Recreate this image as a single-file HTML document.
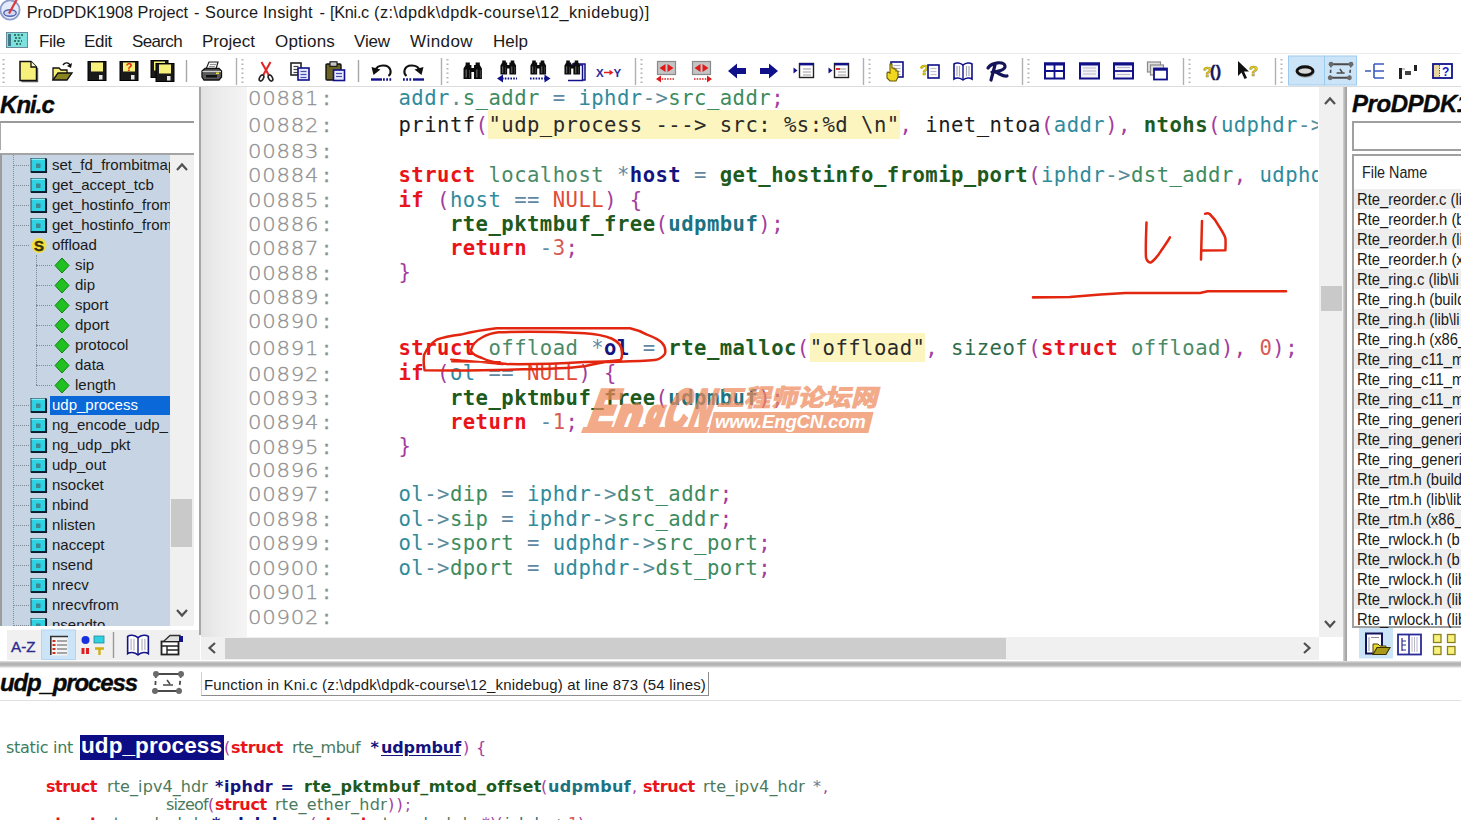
<!DOCTYPE html><html lang="en"><head><meta charset="utf-8"><title>ProDPDK1908 Project - Source Insight</title><style>
html,body{margin:0;padding:0;background:#fff;}
body{width:1461px;height:820px;overflow:hidden;position:relative;font-family:"Liberation Sans",sans-serif;}
.r,.t,.a{position:absolute;}
.t{white-space:pre;line-height:1;}
.sans{font-family:"Liberation Sans",sans-serif;}
.mono{font-family:"Liberation Mono",monospace;}
.dmono{font-family:"DejaVu Sans Mono","Liberation Mono",monospace;}
.dsans{font-family:"DejaVu Sans","Liberation Sans",sans-serif;}
svg{position:absolute;overflow:visible;}
.code{position:absolute;left:398.5px;white-space:pre;line-height:1;font-family:"DejaVu Sans Mono","Liberation Mono",monospace;font-size:20.6px;letter-spacing:0.45px;color:#222;}
.code b{font-weight:bold;}
.v{color:#2f8b9c}.k{color:#e8141a;font-weight:bold}.p{color:#a23c9e}.o{color:#5f88a2}.f{color:#1d5a1d;font-weight:bold}
.d{color:#14147e;font-weight:bold}.ty{color:#4a8a66}.n{color:#d65a55}.nu{color:#e24b36}.pa{color:#1b7282;font-weight:bold}
.s{background:#fdf5c0;color:#2a2a2a;padding:2.6px 0 1.6px}.m{color:#3d8b5e}.ar{color:#5b8c9c}.sz{color:#2e6b4a}.id{color:#1c1c1c}
.ln{position:absolute;left:248.3px;white-space:pre;line-height:1;font-family:"DejaVu Sans","Liberation Sans",sans-serif;font-weight:200;font-size:18.8px;letter-spacing:0.68px;color:#909090;-webkit-text-stroke:0.3px #909090;transform:scaleX(1.13);transform-origin:0 0;}.ln i{font-style:normal;font-weight:400;display:inline-block;width:12.64px;text-align:center;letter-spacing:0}
.tree{position:absolute;white-space:pre;line-height:1;font-size:15px;color:#1a1a1a;letter-spacing:0}
.fl{position:absolute;white-space:pre;line-height:1;font-size:16px;color:#1a1a1a;left:1357px;transform:scaleX(0.923);transform-origin:0 0}
</style></head><body>
<svg style="left:0px;top:0px" width="22" height="24" viewBox="0 0 22 24" ><circle cx="10" cy="10" r="9.6" fill="#e4ebfa" stroke="#8c9ccc" stroke-width="1.8"/><ellipse cx="10" cy="13" rx="6.2" ry="3.2" fill="#d0daf4" stroke="#5464b0" stroke-width="1.4"/><path d="M9 13.5 L17 -1" stroke="#dc3a3a" stroke-width="2.2" fill="none"/></svg>
<div class="t sans" style="left:26.7px;top:4.2px;font-size:16.3px;color:#1a1a1a;letter-spacing:-0.035px;">ProDPDK1908 Project</div>
<div class="t sans" style="left:194.0px;top:4.2px;font-size:16.3px;color:#1a1a1a;">-</div>
<div class="t sans" style="left:205.0px;top:4.2px;font-size:16.3px;color:#1a1a1a;letter-spacing:0.271px;">Source Insight</div>
<div class="t sans" style="left:319.5px;top:4.2px;font-size:16.3px;color:#1a1a1a;">-</div>
<div class="t sans" style="left:330.0px;top:4.2px;font-size:16.3px;color:#1a1a1a;letter-spacing:-0.294px;">[Kni.c</div>
<div class="t sans" style="left:374.0px;top:4.2px;font-size:16.3px;color:#1a1a1a;letter-spacing:0.469px;">(z:\dpdk\dpdk-course\12_knidebug)]</div>
<svg style="left:6px;top:32px" width="22" height="16" viewBox="0 0 22 16" ><rect x="0.5" y="0.5" width="21" height="15" fill="#7fe0e0" stroke="#6a8a9a"/><rect x="2" y="2" width="3" height="12" fill="#3a7a8a"/><path d="M8 3h9M9 6h7M8 9h8M10 12h5" stroke="#1a5a3a" stroke-width="1.6" stroke-dasharray="2 1.5"/></svg>
<div class="t sans" style="left:39.0px;top:32.6px;font-size:17px;color:#1a1a1a;letter-spacing:-0.348px;">File</div>
<div class="t sans" style="left:84.0px;top:32.6px;font-size:17px;color:#1a1a1a;letter-spacing:-0.323px;">Edit</div>
<div class="t sans" style="left:132.0px;top:32.6px;font-size:17px;color:#1a1a1a;letter-spacing:-0.644px;">Search</div>
<div class="t sans" style="left:202.0px;top:32.6px;font-size:17px;color:#1a1a1a;letter-spacing:0.013px;">Project</div>
<div class="t sans" style="left:275.0px;top:32.6px;font-size:17px;color:#1a1a1a;letter-spacing:0.202px;">Options</div>
<div class="t sans" style="left:354.0px;top:32.6px;font-size:17px;color:#1a1a1a;letter-spacing:-0.135px;">View</div>
<div class="t sans" style="left:410.0px;top:32.6px;font-size:17px;color:#1a1a1a;letter-spacing:0.423px;">Window</div>
<div class="t sans" style="left:493.0px;top:32.6px;font-size:17px;color:#1a1a1a;letter-spacing:0.009px;">Help</div>
<div class="r" style="left:0px;top:53px;width:1461px;height:1px;background:#ececec;"></div>
<div class="r" style="left:0px;top:86px;width:1461px;height:1px;background:#dcdcdc;"></div>
<svg style="left:0;top:0" width="1461" height="90" viewBox="0 0 1461 90"><rect x="1288.5" y="56" width="36" height="29" fill="#cce4f7" stroke="#9ccbf0" stroke-width="1"/><rect x="1324.5" y="56" width="32" height="29" fill="#cce4f7" stroke="#9ccbf0" stroke-width="1"/><path d="M186.5 60V82" stroke="#a6a6a6" stroke-width="1.4"/><path d="M358.5 60V82" stroke="#a6a6a6" stroke-width="1.4"/><path d="M236.5 58V85" stroke="#b0b0b0" stroke-width="1.4"/><path d="M441.5 58V85" stroke="#b0b0b0" stroke-width="1.4"/><path d="M635.5 58V85" stroke="#b0b0b0" stroke-width="1.4"/><path d="M863.5 58V85" stroke="#b0b0b0" stroke-width="1.4"/><path d="M1022.5 58V85" stroke="#b0b0b0" stroke-width="1.4"/><path d="M1183.5 58V85" stroke="#b0b0b0" stroke-width="1.4"/><path d="M1275.5 58V85" stroke="#b0b0b0" stroke-width="1.4"/><path d="M3.5 59V85" stroke="#b4b4b4" stroke-width="2" stroke-dasharray="1.5 3"/><path d="M242.5 59V85" stroke="#b4b4b4" stroke-width="2" stroke-dasharray="1.5 3"/><path d="M447.5 59V85" stroke="#b4b4b4" stroke-width="2" stroke-dasharray="1.5 3"/><path d="M641.5 59V85" stroke="#b4b4b4" stroke-width="2" stroke-dasharray="1.5 3"/><path d="M869.5 59V85" stroke="#b4b4b4" stroke-width="2" stroke-dasharray="1.5 3"/><path d="M1028.5 59V85" stroke="#b4b4b4" stroke-width="2" stroke-dasharray="1.5 3"/><path d="M1189.5 59V85" stroke="#b4b4b4" stroke-width="2" stroke-dasharray="1.5 3"/><path d="M1281.5 59V85" stroke="#b4b4b4" stroke-width="2" stroke-dasharray="1.5 3"/><g transform="translate(18,61)"><path d="M2 0.5 H13 L18.5 6 V19.5 H2 Z" fill="#f7f07a" stroke="#111" stroke-width="1.5"/><path d="M13 0.5 V6 H18.5" fill="#fffbd0" stroke="#111" stroke-width="1.3"/><path d="M19.6 7V20.6H3.5" stroke="#555" stroke-width="1.2" fill="none"/></g><g transform="translate(52,61)"><path d="M1 19 V7 H7 L9 9 H15 V12" fill="#f7f07a" stroke="#111" stroke-width="1.3"/><path d="M1 19 L6 12 H20 L15 19 Z" fill="#8a8420" stroke="#111" stroke-width="1.3"/><path d="M11 4 C13 1 17 1 18.5 5" fill="none" stroke="#111" stroke-width="1.4"/><path d="M20 2 L19 7 L15 5 Z" fill="#111"/></g><g transform="translate(87,61)"><g transform="translate(0,0)"><rect x="1" y="0.5" width="18" height="19" fill="#1a1a1a" stroke="#000" stroke-width="1"/><rect x="4" y="1.5" width="12" height="9" fill="#f7f07a"/><rect x="12" y="14" width="3.5" height="4.5" fill="#e8e8e8"/></g></g><g transform="translate(119,61)"><g transform="translate(0,0)"><rect x="1" y="0.5" width="18" height="19" fill="#1a1a1a" stroke="#000" stroke-width="1"/><rect x="4" y="1.5" width="12" height="9" fill="#f7f07a"/><rect x="12" y="14" width="3.5" height="4.5" fill="#e8e8e8"/><text x="10.0" y="10" font-family="Liberation Sans,sans-serif" font-weight="bold" font-size="11" text-anchor="middle" fill="#e02010">?</text></g></g><g transform="translate(153,61)"><g transform="translate(-3,-1)"><rect x="1" y="0.5" width="17" height="17" fill="#1a1a1a" stroke="#000" stroke-width="1"/><rect x="4" y="1.5" width="11" height="9" fill="#f7f07a"/><rect x="11" y="12" width="3.5" height="4.5" fill="#e8e8e8"/></g><g transform="translate(2,2)"><rect x="1" y="0.5" width="18" height="18" fill="#1a1a1a" stroke="#000" stroke-width="1"/><rect x="4" y="1.5" width="12" height="9" fill="#f7f07a"/><rect x="12" y="13" width="3.5" height="4.5" fill="#e8e8e8"/></g></g><g transform="translate(201,61)"><path d="M5 8 L8 1 H17 L15 8 Z" fill="#f4f4f4" stroke="#222" stroke-width="1.2"/><path d="M9 3.5h6M8 5.5h6" stroke="#888" stroke-width="0.9"/><path d="M1 10 L4 7.5 H18 L20.5 10 V16 L18 19 H3 L1 16 Z" fill="#5a5a5a" stroke="#111" stroke-width="1.3"/><path d="M1.5 10.5 H20" stroke="#d0d0d0" stroke-width="1.2"/><rect x="5" y="14" width="11" height="2.5" fill="#111"/><rect x="15" y="11.5" width="3" height="1.6" fill="#e8e040"/></g><g transform="translate(256,61)"><path d="M5.500 1 L13 14.500 M14.500 1 L7 14.500" stroke="#e02828" stroke-width="2.1" fill="none"/><ellipse cx="5.5" cy="17" rx="1.9" ry="3.300" transform="rotate(28 5.500 17)" fill="none" stroke="#222" stroke-width="1.6"/><ellipse cx="14.500" cy="17" rx="1.9" ry="3.300" transform="rotate(-28 14.500 17)" fill="none" stroke="#222" stroke-width="1.6"/></g><g transform="translate(290,61)"><rect x="1" y="2" width="10" height="12" fill="#fff" stroke="#222" stroke-width="1.6"/><path d="M3.5 5.5H8.5" stroke="#444" stroke-width="1.2"/><path d="M3.5 8.5H8.5" stroke="#444" stroke-width="1.2"/><path d="M3.5 11.5H8.5" stroke="#444" stroke-width="1.2"/><rect x="8" y="7" width="11" height="12" fill="#e8ecff" stroke="#10108a" stroke-width="1.6"/><path d="M10.5 10.5H16.5" stroke="#4a4ab0" stroke-width="1.2"/><path d="M10.5 13.5H16.5" stroke="#4a4ab0" stroke-width="1.2"/><path d="M10.5 16.5H16.5" stroke="#4a4ab0" stroke-width="1.2"/></g><g transform="translate(325,61)"><rect x="1" y="3" width="15" height="16" rx="1" fill="#6a6420" stroke="#111" stroke-width="1.4"/><rect x="5" y="0.8" width="7" height="4.5" fill="#c8c8c8" stroke="#111" stroke-width="1.1"/><rect x="8.5" y="9" width="11" height="10.5" fill="#e8ecff" stroke="#10108a" stroke-width="1.6"/><path d="M11.0 12.5H17.0" stroke="#4a4ab0" stroke-width="1.2"/><path d="M11.0 15.5H17.0" stroke="#4a4ab0" stroke-width="1.2"/></g><g transform="translate(371,61)"><path d="M4.500 9.500 C6 3 18 2.500 19.500 9.500 C20 12 19 14 17.500 15" fill="none" stroke="#111" stroke-width="2.1"/><path d="M0.500 6 L9.500 8.500 L2.500 14 Z" fill="#111"/><path d="M0 18.5H11" stroke="#10108a" stroke-width="2.4"/><path d="M12 18.5H21" stroke="#10108a" stroke-width="2.4" stroke-dasharray="1.8 1.4"/></g><g transform="translate(404,61)"><path d="M15.500 9.500 C14 3 2 2.500 0.500 9.500 C0 12 1 14 2.500 15" fill="none" stroke="#111" stroke-width="2.1"/><path d="M19.500 6 L10.500 8.500 L17.500 14 Z" fill="#111"/><path d="M9 18.5H20" stroke="#10108a" stroke-width="2.4"/><path d="M-1 18.5H8" stroke="#10108a" stroke-width="2.4" stroke-dasharray="1.8 1.4"/></g><g transform="translate(462,61)"><g transform="translate(1,1) scale(1.05,1)"><path d="M2.500 0.500h4v2.500h1.500v3h2.500v-3h1.500v-2.500h4v2.500l2 3.500v10.500h-7.500v-7h-2.500v7h-7.500v-10.500l2-3.500z" fill="#0c0c0c"/><path d="M3 7.500V15.500M13.200 7.500V15.500" stroke="#9a9a9a" stroke-width="1" opacity="0.8"/><path d="M6.300 8V16M16.500 8V16" stroke="#555" stroke-width="0.9" opacity="0.8"/></g></g><g transform="translate(497,61)"><g transform="translate(3,-1) scale(0.8925,0.85)"><path d="M2.500 0.500h4v2.500h1.500v3h2.500v-3h1.500v-2.500h4v2.500l2 3.500v10.500h-7.500v-7h-2.500v7h-7.500v-10.500l2-3.500z" fill="#0c0c0c"/><path d="M3 7.500V15.500M13.200 7.500V15.500" stroke="#9a9a9a" stroke-width="1" opacity="0.8"/><path d="M6.300 8V16M16.500 8V16" stroke="#555" stroke-width="0.9" opacity="0.8"/></g><path d="M5 17.5H20" stroke="#10108a" stroke-width="1.8" stroke-dasharray="1.6 1.2"/><path d="M0 17.5 L6 13.5 V21.5 Z" fill="#10108a"/></g><g transform="translate(530,61)"><g transform="translate(0,-1) scale(0.8925,0.85)"><path d="M2.500 0.500h4v2.500h1.500v3h2.500v-3h1.500v-2.500h4v2.500l2 3.500v10.500h-7.500v-7h-2.500v7h-7.500v-10.500l2-3.500z" fill="#0c0c0c"/><path d="M3 7.500V15.500M13.200 7.500V15.500" stroke="#9a9a9a" stroke-width="1" opacity="0.8"/><path d="M6.300 8V16M16.500 8V16" stroke="#555" stroke-width="0.9" opacity="0.8"/></g><path d="M0 17.5H15" stroke="#10108a" stroke-width="1.8" stroke-dasharray="1.6 1.2"/><path d="M20.5 17.5 L14.5 13.5 V21.5 Z" fill="#10108a"/></g><g transform="translate(565,61)"><path d="M7 3H20V19H5" fill="#fff" stroke="#10108a" stroke-width="1.5"/><path d="M5 5.5H17.5V21H3" fill="#fff" stroke="#10108a" stroke-width="1.5" transform="translate(0,-1.5)"/><g transform="translate(-1,-1) scale(0.8925,0.85)"><path d="M2.500 0.500h4v2.500h1.500v3h2.500v-3h1.500v-2.500h4v2.500l2 3.500v10.500h-7.500v-7h-2.500v7h-7.500v-10.500l2-3.500z" fill="#0c0c0c"/><path d="M3 7.500V15.500M13.200 7.500V15.500" stroke="#9a9a9a" stroke-width="1" opacity="0.8"/><path d="M6.300 8V16M16.500 8V16" stroke="#555" stroke-width="0.9" opacity="0.8"/></g></g><text x="596" y="76.500" font-family="Liberation Sans,sans-serif" font-weight="bold" font-size="11.500" fill="#2828a0">X</text><text x="613.500" y="76.500" font-family="Liberation Sans,sans-serif" font-weight="bold" font-size="11.500" fill="#2828a0">Y</text><path d="M604 72.500H611" stroke="#e02020" stroke-width="1.5"/><path d="M613.500 72.500 L609.500 69.800 V75.200 Z" fill="#e02020"/><g transform="translate(656,61)"><rect x="1.5" y="0.5" width="18" height="13" fill="#c4c4c4" stroke="#8a8a8a" stroke-width="1.2"/><path d="M3.500 7 L9.500 3 V11 Z M17.500 7 L11.500 3 V11 Z" fill="#e01818"/><path d="M3 18H18" stroke="#e01818" stroke-width="1.6" stroke-dasharray="1.5 1.2"/><path d="M0 18 L5 14.5 V21.5 Z" fill="#e01818"/></g><g transform="translate(691,61)"><rect x="1.5" y="0.5" width="18" height="13" fill="#c4c4c4" stroke="#8a8a8a" stroke-width="1.2"/><path d="M3.500 7 L9.500 3 V11 Z M17.500 7 L11.500 3 V11 Z" fill="#e01818"/><path d="M3 18H18" stroke="#e01818" stroke-width="1.6" stroke-dasharray="1.5 1.2"/><path d="M21 18 L16 14.5 V21.5 Z" fill="#e01818"/></g><g transform="translate(727,61)"><path d="M1 10 L10 2.5 V7 H19 V13 H10 V17.5 Z" fill="#10108a"/></g><g transform="translate(759,61)"><path d="M19 10 L10 2.5 V7 H1 V13 H10 V17.5 Z" fill="#10108a"/></g><g transform="translate(793,61)"><rect x="6.5" y="2.5" width="14" height="14" fill="#fff" stroke="#222" stroke-width="1.4"/><path d="M6.5 3.2H20.5" stroke="#10108a" stroke-width="2.4"/><path d="M10 8H18M10 11H18M10 14H18" stroke="#9a9a9a" stroke-width="1.2"/><path d="M0.5 6.5 L4.5 9.5 L0.5 12.5 Z" fill="#10108a"/></g><g transform="translate(828,61)"><rect x="6.5" y="2.5" width="14" height="14" fill="#fff" stroke="#222" stroke-width="1.4"/><path d="M6.5 3.2H20.5" stroke="#10108a" stroke-width="2.4"/><path d="M10 8H18M10 11H18M10 14H18" stroke="#9a9a9a" stroke-width="1.2"/><path d="M0.5 6.5 L4.5 9.5 L0.5 12.5 Z" fill="#10108a"/><path d="M8 8H12" stroke="#e01818" stroke-width="1.8"/></g><g transform="translate(885,61)"><rect x="6" y="1" width="12" height="15" fill="#fff" stroke="#10108a" stroke-width="1.6"/><path d="M8.5 4.5H15.5" stroke="#b0b0c8" stroke-width="1.2"/><path d="M8.5 7.5H15.5" stroke="#b0b0c8" stroke-width="1.2"/><path d="M8.5 10.5H15.5" stroke="#b0b0c8" stroke-width="1.2"/><path d="M8.5 13.5H15.5" stroke="#b0b0c8" stroke-width="1.2"/><path d="M2 12 V17 L5 20 H11 L13 16 V10 H11 V8 H9 V7 H7 V3 H5 V12 L3 11 Z" fill="#f0d820" stroke="#6a5a00" stroke-width="1.1"/></g><g transform="translate(920,61)"><text x="0" y="14" font-family="Liberation Sans,sans-serif" font-weight="bold" font-size="15" fill="#efe022" stroke="#9a8c10" stroke-width="0.6">?</text><rect x="8" y="4" width="11" height="13" fill="#fff" stroke="#10108a" stroke-width="1.6"/><path d="M10.5 7.5H16.5" stroke="#c0c0d0" stroke-width="1.2"/><path d="M10.5 10.5H16.5" stroke="#c0c0d0" stroke-width="1.2"/><path d="M10.5 13.5H16.5" stroke="#c0c0d0" stroke-width="1.2"/></g><g transform="translate(953,61)"><path d="M10 4 C7 1.5 3 1.5 1 3 V18 C3 16.5 7 16.5 10 19 C13 16.5 17 16.5 19 18 V3 C17 1.5 13 1.5 10 4 Z" fill="#fff" stroke="#10108a" stroke-width="1.6"/><path d="M10 4V19" stroke="#10108a" stroke-width="1.4"/><path d="M4 5V15M6.5 5V15.5M13.5 5V15.5M16 5V15" stroke="#a8a8b8" stroke-width="1.2"/></g><g transform="translate(987,61)"><path d="M1 7 C5 1 17 0 18 5 C18.5 9 10 11 5 11 M8 4 L4 19 M8 11 C12 12 16 16 20 15" fill="none" stroke="#14145a" stroke-width="3.2" stroke-linecap="round"/></g><g transform="translate(1044,61)"><rect x="1" y="2.5" width="19" height="15" fill="#fff" stroke="#10108a" stroke-width="2"/><path d="M0 3H21" stroke="#10108a" stroke-width="3"/><path d="M1 10H20M10.5 2.5V17.5" stroke="#10108a" stroke-width="1.8"/></g><g transform="translate(1079,61)"><rect x="1" y="2.5" width="19" height="15" fill="#f4f4f8" stroke="#10108a" stroke-width="2"/><path d="M0 3H21" stroke="#10108a" stroke-width="3"/><path d="M4 7H17M4 10H17M4 13H17" stroke="#b8b8c8" stroke-width="1.2"/></g><g transform="translate(1113,61)"><rect x="1" y="2.5" width="19" height="15" fill="#f4f4f8" stroke="#10108a" stroke-width="2"/><path d="M0 3H21" stroke="#10108a" stroke-width="3"/><path d="M1 10H20" stroke="#10108a" stroke-width="1.8"/><path d="M4 6.5H17M4 13.5H17" stroke="#b8b8c8" stroke-width="1.2"/></g><g transform="translate(1147,61)"><rect x="0.5" y="1" width="13" height="10" fill="#e0e0e0" stroke="#8a8a8a" stroke-width="1.2"/><rect x="3.5" y="4" width="13" height="10" fill="#e0e0e0" stroke="#8a8a8a" stroke-width="1.2"/><rect x="7" y="7.5" width="13" height="11" fill="#fff" stroke="#10108a" stroke-width="1.8"/><path d="M7 8.5H20" stroke="#10108a" stroke-width="2.4"/></g><text x="1203" y="77" font-family="Liberation Sans,sans-serif" font-weight="bold" font-size="15" fill="#efe022" stroke="#9a8c10" stroke-width="0.6">?</text><text x="1210" y="77" font-family="Liberation Sans,sans-serif" font-weight="bold" font-size="16" fill="#14145a" stroke="#14145a" stroke-width="0.4" letter-spacing="0.3">()</text><g transform="translate(1238,61)"><path d="M0 0 V15 L3.5 11.5 L6.5 18 L9 17 L6 10.5 H11 Z" fill="#111"/><text x="11" y="15" font-family="Liberation Sans,sans-serif" font-weight="bold" font-size="15" fill="#efe022" stroke="#9a8c10" stroke-width="0.6">?</text></g><g transform="translate(1295,61)"><ellipse cx="10.5" cy="11.5" rx="8.5" ry="4.6" fill="#d8d8d8" stroke="#9a9a9a" stroke-width="1"/><ellipse cx="10" cy="10" rx="8" ry="4.2" fill="none" stroke="#111" stroke-width="3"/></g><g transform="translate(1330,61)"><g transform="translate(-3,0) scale(0.8)"><path d="M6 4 H29 M4 21 H27" fill="none" stroke="#4a4a4a" stroke-width="2.4"/><path d="M30 4 L28 21 M5 4 L4 21" fill="none" stroke="#4a4a4a" stroke-width="2" stroke-dasharray="4 3"/><circle cx="5" cy="4" r="3" fill="#6a6a6a"/><circle cx="30" cy="4" r="3" fill="#6a6a6a"/><circle cx="4" cy="21" r="3" fill="#6a6a6a"/><circle cx="28" cy="21" r="3" fill="#6a6a6a"/><path d="M12 15h10M16 10l3 4" stroke="#4a4a4a" stroke-width="1.8" fill="none"/></g></g><g transform="translate(1365,61)"><path d="M0 10H6M9 3H19M9 10H19M9 17H19M9 3V17" stroke="#3a5ac0" stroke-width="1.6" fill="none"/></g><g transform="translate(1398,61)"><rect x="1" y="7" width="3" height="11" fill="#222"/><rect x="7" y="10" width="6" height="4" fill="#444"/><rect x="16" y="4" width="3" height="6" fill="#222"/><path d="M4 8H7" stroke="#888" stroke-width="1"/></g><g transform="translate(1432,61)"><rect x="1" y="3" width="19" height="14" fill="#fff" stroke="#10108a" stroke-width="1.8"/><rect x="2" y="4" width="5" height="12" fill="#e8d8a0"/><path d="M7.5 4V16" stroke="#e02020" stroke-width="1" stroke-dasharray="1.5 1"/><text x="10" y="15" font-family="Liberation Sans,sans-serif" font-weight="bold" font-size="12" fill="#1818d0">?</text></g></svg>
<div class="t sans" style="left:0.0px;top:92.7px;font-size:24px;color:#0a0a0a;letter-spacing:-0.935px;font-weight:bold;font-style:italic;-webkit-text-stroke:0.35px #0a0a0a;">Kni.c</div>
<div class="r" style="left:0px;top:121px;width:194px;height:29px;background:#fff;border:1px solid #a8a8a8;border-top:2px solid #9a9a9a;border-right:none;border-bottom:none;box-sizing:border-box;"></div>
<div class="r" style="left:0px;top:153px;width:194px;height:473px;background:#c6d4e3;border-top:2px solid #a4a4a4;border-left:2px solid #9c9c9c;box-sizing:border-box;"></div>
<div class="r" style="left:169.5px;top:155px;width:24.5px;height:471px;background:#f0f0f0;"></div>
<div class="r" style="left:171.2px;top:498.5px;width:21.3px;height:48.5px;background:#c9c9c9;"></div>
<svg style="left:174px;top:159px" width="16" height="16" viewBox="-8 -8 16 16"><path d="M-5 3 L0 -2.5 L5 3" fill="none" stroke="#505050" stroke-width="2.2"/></svg>
<svg style="left:174px;top:605px" width="16" height="16" viewBox="-8 -8 16 16"><path d="M-5 -3 L0 2.5 L5 -3" fill="none" stroke="#505050" stroke-width="2.2"/></svg>
<div class="a" style="left:2px;top:155px;width:167.5px;height:471px;overflow:hidden">
<div class="a" style="left:11px;top:0;height:471px;width:0;border-left:1px dotted #7e8a98"></div>
<div class="a" style="left:34px;top:100px;height:130px;width:0;border-left:1px dotted #7e8a98"></div>
<div class="a" style="left:11px;top:10px;width:16px;height:0;border-top:1px dotted #7e8a98"></div>
<svg style="left:28px;top:2px" width="18" height="17" viewBox="0 0 18 17" ><rect x="1" y="1.5" width="14.5" height="13" fill="#2ed2e2" stroke="#1a4a5a" stroke-width="1"/><path d="M1.5 2.2H15" stroke="#9af0f8" stroke-width="1.2"/><path d="M0.8 15.2h15.4V1.5" stroke="#0a1a2a" stroke-width="1.7" fill="none"/><rect x="6" y="6.5" width="4.5" height="4.5" fill="#3a8a96"/></svg>
<div class="tree" style="left:50px;top:2.4000000000000004px">set_fd_frombitmap</div>
<div class="a" style="left:11px;top:30px;width:16px;height:0;border-top:1px dotted #7e8a98"></div>
<svg style="left:28px;top:22px" width="18" height="17" viewBox="0 0 18 17" ><rect x="1" y="1.5" width="14.5" height="13" fill="#2ed2e2" stroke="#1a4a5a" stroke-width="1"/><path d="M1.5 2.2H15" stroke="#9af0f8" stroke-width="1.2"/><path d="M0.8 15.2h15.4V1.5" stroke="#0a1a2a" stroke-width="1.7" fill="none"/><rect x="6" y="6.5" width="4.5" height="4.5" fill="#3a8a96"/></svg>
<div class="tree" style="left:50px;top:22.4px">get_accept_tcb</div>
<div class="a" style="left:11px;top:50px;width:16px;height:0;border-top:1px dotted #7e8a98"></div>
<svg style="left:28px;top:42px" width="18" height="17" viewBox="0 0 18 17" ><rect x="1" y="1.5" width="14.5" height="13" fill="#2ed2e2" stroke="#1a4a5a" stroke-width="1"/><path d="M1.5 2.2H15" stroke="#9af0f8" stroke-width="1.2"/><path d="M0.8 15.2h15.4V1.5" stroke="#0a1a2a" stroke-width="1.7" fill="none"/><rect x="6" y="6.5" width="4.5" height="4.5" fill="#3a8a96"/></svg>
<div class="tree" style="left:50px;top:42.4px">get_hostinfo_from</div>
<div class="a" style="left:11px;top:70px;width:16px;height:0;border-top:1px dotted #7e8a98"></div>
<svg style="left:28px;top:62px" width="18" height="17" viewBox="0 0 18 17" ><rect x="1" y="1.5" width="14.5" height="13" fill="#2ed2e2" stroke="#1a4a5a" stroke-width="1"/><path d="M1.5 2.2H15" stroke="#9af0f8" stroke-width="1.2"/><path d="M0.8 15.2h15.4V1.5" stroke="#0a1a2a" stroke-width="1.7" fill="none"/><rect x="6" y="6.5" width="4.5" height="4.5" fill="#3a8a96"/></svg>
<div class="tree" style="left:50px;top:62.4px">get_hostinfo_from</div>
<div class="a" style="left:11px;top:90px;width:16px;height:0;border-top:1px dotted #7e8a98"></div>
<svg style="left:29px;top:82px" width="17" height="17" viewBox="0 0 17 17" ><circle cx="8" cy="8.5" r="7.5" fill="#f0e040"/><text x="8" y="14" font-family="Liberation Sans,sans-serif" font-weight="bold" font-size="15" text-anchor="middle" fill="#3a3000" stroke="#3a3000" stroke-width="0.4">S</text></svg>
<div class="tree" style="left:50px;top:82.4px">offload</div>
<div class="a" style="left:34px;top:110px;width:16px;height:0;border-top:1px dotted #7e8a98"></div>
<svg style="left:52px;top:102px" width="17" height="17" viewBox="0 0 17 17" ><path d="M8 1 L15 8.5 L8 16 L1 8.5 Z" fill="#20c020" stroke="#108010" stroke-width="1"/></svg>
<div class="tree" style="left:73px;top:102.4px">sip</div>
<div class="a" style="left:34px;top:130px;width:16px;height:0;border-top:1px dotted #7e8a98"></div>
<svg style="left:52px;top:122px" width="17" height="17" viewBox="0 0 17 17" ><path d="M8 1 L15 8.5 L8 16 L1 8.5 Z" fill="#20c020" stroke="#108010" stroke-width="1"/></svg>
<div class="tree" style="left:73px;top:122.4px">dip</div>
<div class="a" style="left:34px;top:150px;width:16px;height:0;border-top:1px dotted #7e8a98"></div>
<svg style="left:52px;top:142px" width="17" height="17" viewBox="0 0 17 17" ><path d="M8 1 L15 8.5 L8 16 L1 8.5 Z" fill="#20c020" stroke="#108010" stroke-width="1"/></svg>
<div class="tree" style="left:73px;top:142.4px">sport</div>
<div class="a" style="left:34px;top:170px;width:16px;height:0;border-top:1px dotted #7e8a98"></div>
<svg style="left:52px;top:162px" width="17" height="17" viewBox="0 0 17 17" ><path d="M8 1 L15 8.5 L8 16 L1 8.5 Z" fill="#20c020" stroke="#108010" stroke-width="1"/></svg>
<div class="tree" style="left:73px;top:162.4px">dport</div>
<div class="a" style="left:34px;top:190px;width:16px;height:0;border-top:1px dotted #7e8a98"></div>
<svg style="left:52px;top:182px" width="17" height="17" viewBox="0 0 17 17" ><path d="M8 1 L15 8.5 L8 16 L1 8.5 Z" fill="#20c020" stroke="#108010" stroke-width="1"/></svg>
<div class="tree" style="left:73px;top:182.4px">protocol</div>
<div class="a" style="left:34px;top:210px;width:16px;height:0;border-top:1px dotted #7e8a98"></div>
<svg style="left:52px;top:202px" width="17" height="17" viewBox="0 0 17 17" ><path d="M8 1 L15 8.5 L8 16 L1 8.5 Z" fill="#20c020" stroke="#108010" stroke-width="1"/></svg>
<div class="tree" style="left:73px;top:202.4px">data</div>
<div class="a" style="left:34px;top:230px;width:16px;height:0;border-top:1px dotted #7e8a98"></div>
<svg style="left:52px;top:222px" width="17" height="17" viewBox="0 0 17 17" ><path d="M8 1 L15 8.5 L8 16 L1 8.5 Z" fill="#20c020" stroke="#108010" stroke-width="1"/></svg>
<div class="tree" style="left:73px;top:222.4px">length</div>
<div class="a" style="left:11px;top:250px;width:16px;height:0;border-top:1px dotted #7e8a98"></div>
<svg style="left:28px;top:242px" width="18" height="17" viewBox="0 0 18 17" ><rect x="1" y="1.5" width="14.5" height="13" fill="#2ed2e2" stroke="#1a4a5a" stroke-width="1"/><path d="M1.5 2.2H15" stroke="#9af0f8" stroke-width="1.2"/><path d="M0.8 15.2h15.4V1.5" stroke="#0a1a2a" stroke-width="1.7" fill="none"/><rect x="6" y="6.5" width="4.5" height="4.5" fill="#3a8a96"/></svg>
<div class="a" style="left:48px;top:241px;width:121px;height:19px;background:#0b68d9"></div>
<div class="tree" style="left:50px;top:242.4px;color:#fff">udp_process</div>
<div class="a" style="left:11px;top:270px;width:16px;height:0;border-top:1px dotted #7e8a98"></div>
<svg style="left:28px;top:262px" width="18" height="17" viewBox="0 0 18 17" ><rect x="1" y="1.5" width="14.5" height="13" fill="#2ed2e2" stroke="#1a4a5a" stroke-width="1"/><path d="M1.5 2.2H15" stroke="#9af0f8" stroke-width="1.2"/><path d="M0.8 15.2h15.4V1.5" stroke="#0a1a2a" stroke-width="1.7" fill="none"/><rect x="6" y="6.5" width="4.5" height="4.5" fill="#3a8a96"/></svg>
<div class="tree" style="left:50px;top:262.4px">ng_encode_udp_</div>
<div class="a" style="left:11px;top:290px;width:16px;height:0;border-top:1px dotted #7e8a98"></div>
<svg style="left:28px;top:282px" width="18" height="17" viewBox="0 0 18 17" ><rect x="1" y="1.5" width="14.5" height="13" fill="#2ed2e2" stroke="#1a4a5a" stroke-width="1"/><path d="M1.5 2.2H15" stroke="#9af0f8" stroke-width="1.2"/><path d="M0.8 15.2h15.4V1.5" stroke="#0a1a2a" stroke-width="1.7" fill="none"/><rect x="6" y="6.5" width="4.5" height="4.5" fill="#3a8a96"/></svg>
<div class="tree" style="left:50px;top:282.4px">ng_udp_pkt</div>
<div class="a" style="left:11px;top:310px;width:16px;height:0;border-top:1px dotted #7e8a98"></div>
<svg style="left:28px;top:302px" width="18" height="17" viewBox="0 0 18 17" ><rect x="1" y="1.5" width="14.5" height="13" fill="#2ed2e2" stroke="#1a4a5a" stroke-width="1"/><path d="M1.5 2.2H15" stroke="#9af0f8" stroke-width="1.2"/><path d="M0.8 15.2h15.4V1.5" stroke="#0a1a2a" stroke-width="1.7" fill="none"/><rect x="6" y="6.5" width="4.5" height="4.5" fill="#3a8a96"/></svg>
<div class="tree" style="left:50px;top:302.4px">udp_out</div>
<div class="a" style="left:11px;top:330px;width:16px;height:0;border-top:1px dotted #7e8a98"></div>
<svg style="left:28px;top:322px" width="18" height="17" viewBox="0 0 18 17" ><rect x="1" y="1.5" width="14.5" height="13" fill="#2ed2e2" stroke="#1a4a5a" stroke-width="1"/><path d="M1.5 2.2H15" stroke="#9af0f8" stroke-width="1.2"/><path d="M0.8 15.2h15.4V1.5" stroke="#0a1a2a" stroke-width="1.7" fill="none"/><rect x="6" y="6.5" width="4.5" height="4.5" fill="#3a8a96"/></svg>
<div class="tree" style="left:50px;top:322.4px">nsocket</div>
<div class="a" style="left:11px;top:350px;width:16px;height:0;border-top:1px dotted #7e8a98"></div>
<svg style="left:28px;top:342px" width="18" height="17" viewBox="0 0 18 17" ><rect x="1" y="1.5" width="14.5" height="13" fill="#2ed2e2" stroke="#1a4a5a" stroke-width="1"/><path d="M1.5 2.2H15" stroke="#9af0f8" stroke-width="1.2"/><path d="M0.8 15.2h15.4V1.5" stroke="#0a1a2a" stroke-width="1.7" fill="none"/><rect x="6" y="6.5" width="4.5" height="4.5" fill="#3a8a96"/></svg>
<div class="tree" style="left:50px;top:342.4px">nbind</div>
<div class="a" style="left:11px;top:370px;width:16px;height:0;border-top:1px dotted #7e8a98"></div>
<svg style="left:28px;top:362px" width="18" height="17" viewBox="0 0 18 17" ><rect x="1" y="1.5" width="14.5" height="13" fill="#2ed2e2" stroke="#1a4a5a" stroke-width="1"/><path d="M1.5 2.2H15" stroke="#9af0f8" stroke-width="1.2"/><path d="M0.8 15.2h15.4V1.5" stroke="#0a1a2a" stroke-width="1.7" fill="none"/><rect x="6" y="6.5" width="4.5" height="4.5" fill="#3a8a96"/></svg>
<div class="tree" style="left:50px;top:362.4px">nlisten</div>
<div class="a" style="left:11px;top:390px;width:16px;height:0;border-top:1px dotted #7e8a98"></div>
<svg style="left:28px;top:382px" width="18" height="17" viewBox="0 0 18 17" ><rect x="1" y="1.5" width="14.5" height="13" fill="#2ed2e2" stroke="#1a4a5a" stroke-width="1"/><path d="M1.5 2.2H15" stroke="#9af0f8" stroke-width="1.2"/><path d="M0.8 15.2h15.4V1.5" stroke="#0a1a2a" stroke-width="1.7" fill="none"/><rect x="6" y="6.5" width="4.5" height="4.5" fill="#3a8a96"/></svg>
<div class="tree" style="left:50px;top:382.4px">naccept</div>
<div class="a" style="left:11px;top:410px;width:16px;height:0;border-top:1px dotted #7e8a98"></div>
<svg style="left:28px;top:402px" width="18" height="17" viewBox="0 0 18 17" ><rect x="1" y="1.5" width="14.5" height="13" fill="#2ed2e2" stroke="#1a4a5a" stroke-width="1"/><path d="M1.5 2.2H15" stroke="#9af0f8" stroke-width="1.2"/><path d="M0.8 15.2h15.4V1.5" stroke="#0a1a2a" stroke-width="1.7" fill="none"/><rect x="6" y="6.5" width="4.5" height="4.5" fill="#3a8a96"/></svg>
<div class="tree" style="left:50px;top:402.4px">nsend</div>
<div class="a" style="left:11px;top:430px;width:16px;height:0;border-top:1px dotted #7e8a98"></div>
<svg style="left:28px;top:422px" width="18" height="17" viewBox="0 0 18 17" ><rect x="1" y="1.5" width="14.5" height="13" fill="#2ed2e2" stroke="#1a4a5a" stroke-width="1"/><path d="M1.5 2.2H15" stroke="#9af0f8" stroke-width="1.2"/><path d="M0.8 15.2h15.4V1.5" stroke="#0a1a2a" stroke-width="1.7" fill="none"/><rect x="6" y="6.5" width="4.5" height="4.5" fill="#3a8a96"/></svg>
<div class="tree" style="left:50px;top:422.4px">nrecv</div>
<div class="a" style="left:11px;top:450px;width:16px;height:0;border-top:1px dotted #7e8a98"></div>
<svg style="left:28px;top:442px" width="18" height="17" viewBox="0 0 18 17" ><rect x="1" y="1.5" width="14.5" height="13" fill="#2ed2e2" stroke="#1a4a5a" stroke-width="1"/><path d="M1.5 2.2H15" stroke="#9af0f8" stroke-width="1.2"/><path d="M0.8 15.2h15.4V1.5" stroke="#0a1a2a" stroke-width="1.7" fill="none"/><rect x="6" y="6.5" width="4.5" height="4.5" fill="#3a8a96"/></svg>
<div class="tree" style="left:50px;top:442.4px">nrecvfrom</div>
<div class="a" style="left:11px;top:470px;width:16px;height:0;border-top:1px dotted #7e8a98"></div>
<svg style="left:28px;top:462px" width="18" height="17" viewBox="0 0 18 17" ><rect x="1" y="1.5" width="14.5" height="13" fill="#2ed2e2" stroke="#1a4a5a" stroke-width="1"/><path d="M1.5 2.2H15" stroke="#9af0f8" stroke-width="1.2"/><path d="M0.8 15.2h15.4V1.5" stroke="#0a1a2a" stroke-width="1.7" fill="none"/><rect x="6" y="6.5" width="4.5" height="4.5" fill="#3a8a96"/></svg>
<div class="tree" style="left:50px;top:462.4px">nsendto</div>
</div>
<div class="r" style="left:7px;top:630px;width:193px;height:30px;background:#f0f0f0;"></div>
<svg style="left:0;top:620px" width="200" height="45" viewBox="0 620 200 45"><rect x="41.5" y="630" width="34" height="29.500" fill="#cce4f7" stroke="#b4d6f2"/><text x="11" y="652" font-family="Liberation Sans,sans-serif" font-size="15" fill="#2a2a90" stroke="#2a2a90" stroke-width="0.35" textLength="24.5" lengthAdjust="spacingAndGlyphs">A-Z</text><rect x="50.5" y="636.5" width="17" height="19" fill="#f4f4f4" stroke="none"/><path d="M50 636.5H68M50.8 636V655" stroke="#333" stroke-width="1.6" fill="none"/><path d="M57 641H67M57 645H67M57 649H67M57 653H67" stroke="#8a8a8a" stroke-width="1.6"/><path d="M52.5 641h3M52.5 645h3M52.5 649h3M52.5 653h3" stroke="#d03020" stroke-width="1.8"/><circle cx="85.5" cy="640" r="4" fill="#1830e0"/><rect x="94" y="636" width="10" height="7" fill="#30d0e0" stroke="#208a9a" stroke-width="0.8"/><rect x="81.5" y="648" width="3" height="6" fill="#e02020"/><rect x="86" y="648" width="3" height="6" fill="#e02020"/><path d="M95 648.5H104M99.5 648V655" stroke="#d0b010" stroke-width="2.4"/><path d="M113.5 632V658" stroke="#9a9a9a" stroke-width="1.4"/><g transform="translate(126.5,633) scale(1.15,1.15)"><path d="M10 4 C7 1.5 3 1.5 1 3 V18 C3 16.5 7 16.5 10 19 C13 16.5 17 16.5 19 18 V3 C17 1.5 13 1.5 10 4 Z" fill="#fff" stroke="#14148a" stroke-width="1.4"/><path d="M10 4V19" stroke="#14148a" stroke-width="1.2"/><path d="M4 5V15M6.5 5V15.5M13.5 5V15.5M16 5V15" stroke="#b0b0c0" stroke-width="1"/></g><rect x="161.5" y="641.5" width="17" height="13" fill="#fff" stroke="#222" stroke-width="1.8"/><path d="M161 646H179M167 646V655M167 650H179" stroke="#222" stroke-width="1.4"/><path d="M164 641 L170 635.5 H180 V641" fill="#e0e0e0" stroke="#333" stroke-width="1.4"/><rect x="179" y="636" width="4" height="6" fill="#14148a"/></svg>
<div class="r" style="left:199.3px;top:87px;width:1.8px;height:548px;background:#a6a6a6;"></div>
<div class="r" style="left:201px;top:87px;width:45.5px;height:550px;background:linear-gradient(90deg,#e2e2e2 0%,#ebebeb 35%,#f5f5f5 100%);"></div>
<div class="a" style="left:201px;top:87px;width:1117px;height:549px;overflow:hidden"><div class="a" style="left:-201px;top:-87px;width:1461px;height:820px">
<div class="ln" style="top:89.9px">00881<i>:</i></div>
<div class="code" style="top:87.7px"><span class="v">addr</span><span class="ar">.</span><span class="m">s_addr</span><span class="o"> = </span><span class="v">iphdr</span><span class="ar">-&gt;</span><span class="m">src_addr</span><span class="p">;</span></div>
<div class="ln" style="top:117.2px">00882<i>:</i></div>
<div class="code" style="top:115.0px"><span class="id">printf</span><span class="p">(</span><span class="s">"udp_process ---&gt; src: %s:%d \n"</span><span class="p">, </span><span class="id">inet_ntoa</span><span class="p">(</span><span class="v">addr</span><span class="p">), </span><span class="f">ntohs</span><span class="p">(</span><span class="v">udphdr</span><span class="ar">-&gt;</span></div>
<div class="ln" style="top:142.5px">00883<i>:</i></div>
<div class="ln" style="top:167.3px">00884<i>:</i></div>
<div class="code" style="top:165.1px"><span class="k">struct</span><span class="ty"> localhost </span><span class="o">*</span><span class="d">host</span><span class="o"> = </span><span class="f">get_hostinfo_fromip_port</span><span class="p">(</span><span class="v">iphdr</span><span class="ar">-&gt;</span><span class="m">dst_addr</span><span class="p">, </span><span class="v">udphd</span></div>
<div class="ln" style="top:191.8px">00885<i>:</i></div>
<div class="code" style="top:189.6px"><span class="k">if</span><span class="p"> (</span><span class="v">host</span><span class="o"> == </span><span class="nu">NULL</span><span class="p">) {</span></div>
<div class="ln" style="top:215.8px">00886<i>:</i></div>
<div class="code" style="top:213.6px"><span class="id">    </span><span class="f">rte_pktmbuf_free</span><span class="p">(</span><span class="pa">udpmbuf</span><span class="p">);</span></div>
<div class="ln" style="top:240.2px">00887<i>:</i></div>
<div class="code" style="top:238.0px"><span class="id">    </span><span class="k">return</span><span class="o"> -</span><span class="n">3</span><span class="p">;</span></div>
<div class="ln" style="top:264.6px">00888<i>:</i></div>
<div class="code" style="top:262.4px"><span class="p">}</span></div>
<div class="ln" style="top:288.9px">00889<i>:</i></div>
<div class="ln" style="top:313.2px">00890<i>:</i></div>
<div class="ln" style="top:340.2px">00891<i>:</i></div>
<div class="code" style="top:338.0px"><span class="k">struct</span><span class="ty"> offload </span><span class="o">*</span><span class="d">ol</span><span class="o"> = </span><span class="f">rte_malloc</span><span class="p">(</span><span class="s">"offload"</span><span class="p">, </span><span class="sz">sizeof</span><span class="p">(</span><span class="k">struct</span><span class="ty"> offload</span><span class="p">), </span><span class="n">0</span><span class="p">);</span></div>
<div class="ln" style="top:365.6px">00892<i>:</i></div>
<div class="code" style="top:363.4px"><span class="k">if</span><span class="p"> (</span><span class="v">ol</span><span class="o"> == </span><span class="nu">NULL</span><span class="p">) {</span></div>
<div class="ln" style="top:390.0px">00893<i>:</i></div>
<div class="code" style="top:387.8px"><span class="id">    </span><span class="f">rte_pktmbuf_free</span><span class="p">(</span><span class="pa">udpmbuf</span><span class="p">);</span></div>
<div class="ln" style="top:414.3px">00894<i>:</i></div>
<div class="code" style="top:412.1px"><span class="id">    </span><span class="k">return</span><span class="o"> -</span><span class="n">1</span><span class="p">;</span></div>
<div class="ln" style="top:438.6px">00895<i>:</i></div>
<div class="code" style="top:436.4px"><span class="p">}</span></div>
<div class="ln" style="top:462.2px">00896<i>:</i></div>
<div class="ln" style="top:486.4px">00897<i>:</i></div>
<div class="code" style="top:484.2px"><span class="v">ol</span><span class="ar">-&gt;</span><span class="m">dip</span><span class="o"> = </span><span class="v">iphdr</span><span class="ar">-&gt;</span><span class="m">dst_addr</span><span class="p">;</span></div>
<div class="ln" style="top:510.9px">00898<i>:</i></div>
<div class="code" style="top:508.7px"><span class="v">ol</span><span class="ar">-&gt;</span><span class="m">sip</span><span class="o"> = </span><span class="v">iphdr</span><span class="ar">-&gt;</span><span class="m">src_addr</span><span class="p">;</span></div>
<div class="ln" style="top:535.3px">00899<i>:</i></div>
<div class="code" style="top:533.1px"><span class="v">ol</span><span class="ar">-&gt;</span><span class="m">sport</span><span class="o"> = </span><span class="v">udphdr</span><span class="ar">-&gt;</span><span class="m">src_port</span><span class="p">;</span></div>
<div class="ln" style="top:559.7px">00900<i>:</i></div>
<div class="code" style="top:557.5px"><span class="v">ol</span><span class="ar">-&gt;</span><span class="m">dport</span><span class="o"> = </span><span class="v">udphdr</span><span class="ar">-&gt;</span><span class="m">dst_port</span><span class="p">;</span></div>
<div class="ln" style="top:584.2px">00901<i>:</i></div>
<div class="ln" style="top:608.5px">00902<i>:</i></div>
</div></div>
<div class="r" style="left:1319px;top:87px;width:23.5px;height:550px;background:#f0f0f0;"></div>
<div class="r" style="left:1321px;top:286px;width:21px;height:25px;background:#c9c9c9;"></div>
<svg style="left:1322px;top:93px" width="16" height="16" viewBox="-8 -8 16 16"><path d="M-5 3 L0 -2.5 L5 3" fill="none" stroke="#505050" stroke-width="2.2"/></svg>
<svg style="left:1322px;top:616px" width="16" height="16" viewBox="-8 -8 16 16"><path d="M-5 -3 L0 2.5 L5 -3" fill="none" stroke="#505050" stroke-width="2.2"/></svg>
<div class="r" style="left:201px;top:637px;width:1118px;height:23px;background:#f0f0f0;"></div>
<div class="r" style="left:225px;top:638px;width:781px;height:21px;background:#cdcdcd;"></div>
<svg style="left:204px;top:640px" width="16" height="16" viewBox="-8 -8 16 16"><path d="M3 -5 L-2.5 0 L3 5" fill="none" stroke="#505050" stroke-width="2.2"/></svg>
<svg style="left:1299px;top:640px" width="16" height="16" viewBox="-8 -8 16 16"><path d="M-3 -5 L2.5 0 L-3 5" fill="none" stroke="#505050" stroke-width="2.2"/></svg>
<div class="r" style="left:1319px;top:637px;width:25px;height:24px;background:#ffffff;"></div>
<div class="r" style="left:1343px;top:87px;width:4.5px;height:574px;background:linear-gradient(90deg,#d4d4d4,#a6a6a6 55%,#a0a0a0);"></div>
<div class="r" style="left:1347px;top:87px;width:114px;height:574px;background:#fff;"></div>
<div class="t sans" style="left:1352.0px;top:91.5px;font-size:24px;color:#0a0a0a;font-weight:bold;font-style:italic;letter-spacing:-0.45px;-webkit-text-stroke:0.35px #0a0a0a;">ProDPDK1908</div>
<div class="r" style="left:1352px;top:121px;width:120px;height:30px;background:#fff;border:2px solid #a0a0a0;box-sizing:border-box;"></div>
<div class="r" style="left:1352px;top:154px;width:120px;height:474px;background:#fff;border:2px solid #a0a0a0;box-sizing:border-box;"></div>
<div class="t sans" style="left:1362.0px;top:164.8px;font-size:16px;color:#222;transform:scaleX(0.895);transform-origin:0 0;">File Name</div>
<div class="r" style="left:1354px;top:189px;width:110px;height:20px;background:#eeeeee;"></div>
<div class="fl" style="top:191.6px">Rte_reorder.c (li</div>
<div class="fl" style="top:211.6px">Rte_reorder.h (b</div>
<div class="r" style="left:1354px;top:229px;width:110px;height:20px;background:#eeeeee;"></div>
<div class="fl" style="top:231.6px">Rte_reorder.h (li</div>
<div class="fl" style="top:251.6px">Rte_reorder.h (x</div>
<div class="r" style="left:1354px;top:269px;width:110px;height:20px;background:#eeeeee;"></div>
<div class="fl" style="top:271.6px">Rte_ring.c (lib\li</div>
<div class="fl" style="top:291.6px">Rte_ring.h (build</div>
<div class="r" style="left:1354px;top:309px;width:110px;height:20px;background:#eeeeee;"></div>
<div class="fl" style="top:311.6px">Rte_ring.h (lib\li</div>
<div class="fl" style="top:331.6px">Rte_ring.h (x86_</div>
<div class="r" style="left:1354px;top:349px;width:110px;height:20px;background:#eeeeee;"></div>
<div class="fl" style="top:351.6px">Rte_ring_c11_m</div>
<div class="fl" style="top:371.6px">Rte_ring_c11_m</div>
<div class="r" style="left:1354px;top:389px;width:110px;height:20px;background:#eeeeee;"></div>
<div class="fl" style="top:391.6px">Rte_ring_c11_m</div>
<div class="fl" style="top:411.6px">Rte_ring_generi</div>
<div class="r" style="left:1354px;top:429px;width:110px;height:20px;background:#eeeeee;"></div>
<div class="fl" style="top:431.6px">Rte_ring_generi</div>
<div class="fl" style="top:451.6px">Rte_ring_generi</div>
<div class="r" style="left:1354px;top:469px;width:110px;height:20px;background:#eeeeee;"></div>
<div class="fl" style="top:471.6px">Rte_rtm.h (build</div>
<div class="fl" style="top:491.6px">Rte_rtm.h (lib\lib</div>
<div class="r" style="left:1354px;top:509px;width:110px;height:20px;background:#eeeeee;"></div>
<div class="fl" style="top:511.6px">Rte_rtm.h (x86_</div>
<div class="fl" style="top:531.6px">Rte_rwlock.h (b</div>
<div class="r" style="left:1354px;top:549px;width:110px;height:20px;background:#eeeeee;"></div>
<div class="fl" style="top:551.6px">Rte_rwlock.h (b</div>
<div class="fl" style="top:571.6px">Rte_rwlock.h (lib</div>
<div class="r" style="left:1354px;top:589px;width:110px;height:20px;background:#eeeeee;"></div>
<div class="fl" style="top:591.6px">Rte_rwlock.h (lib</div>
<div class="fl" style="top:611.6px">Rte_rwlock.h (lib</div>
<div class="r" style="left:1347px;top:628px;width:114px;height:33px;background:#fff;"></div>
<svg style="left:1346px;top:620px" width="115" height="45" viewBox="1346 620 115 45"><rect x="1359" y="628" width="34" height="30.5" fill="#cce4f7"/><rect x="1366" y="633.5" width="16" height="20" fill="#fff" stroke="#14145a" stroke-width="2"/><path d="M1369 637V651" stroke="#a0a0b8" stroke-width="1.2"/><path d="M1371 637.500h8" stroke="#8a8aa0" stroke-width="1"/><path d="M1373 654.5 V644 H1378 L1380 646 H1386 V648" fill="#e8d830" stroke="#4a4000" stroke-width="1"/><path d="M1373 654.500 L1377 647.500 H1390 L1386 654.500 Z" fill="#a89a18" stroke="#3a3000" stroke-width="1.1"/><rect x="1398" y="634.5" width="23" height="20" fill="#fff" stroke="#2a2a9a" stroke-width="1.8"/><path d="M1409 635V654" stroke="#2a2a9a" stroke-width="1.6"/><path d="M1402 638V651M1402 641h4M1402 645h4M1402 650h4" stroke="#2a2a9a" stroke-width="1.2" fill="none"/><path d="M1412 637V652M1414.500 637V652M1417 637V652" stroke="#b8b8c8" stroke-width="1"/><rect x="1433.5" y="634.5" width="7.5" height="8" fill="#f8f27c" stroke="#8a8020" stroke-width="1.3"/><rect x="1447.5" y="634.5" width="7.5" height="8" fill="#f8f27c" stroke="#8a8020" stroke-width="1.3"/><rect x="1433.5" y="646.5" width="7.5" height="8" fill="#f8f27c" stroke="#8a8020" stroke-width="1.3"/><rect x="1447.5" y="646.5" width="7.5" height="8" fill="#f8f27c" stroke="#8a8020" stroke-width="1.3"/></svg>
<div class="r" style="left:0px;top:661px;width:1461px;height:6.5px;background:linear-gradient(180deg,#e4e4e4 0%,#b4b4b4 30%,#b4b4b4 60%,#dcdcdc 85%,#f4f4f4 100%);"></div>
<div class="t sans" style="left:0.0px;top:670.5px;font-size:24px;color:#0a0a0a;letter-spacing:-1.125px;font-weight:bold;font-style:italic;-webkit-text-stroke:0.35px #0a0a0a;">udp_process</div>
<svg style="left:150.5px;top:669.5px" width="34" height="25" viewBox="0 0 34 25" ><path d="M6 4 H29 M4 21 H27" fill="none" stroke="#4a4a4a" stroke-width="2.2"/><path d="M30 4 L28 21 M5 4 L4 21" fill="none" stroke="#4a4a4a" stroke-width="1.8" stroke-dasharray="4 3"/><circle cx="5" cy="4" r="3" fill="#6a6a6a"/><circle cx="30" cy="4" r="3" fill="#6a6a6a"/><circle cx="4" cy="21" r="3" fill="#6a6a6a"/><circle cx="28" cy="21" r="3" fill="#6a6a6a"/><path d="M12 15h10M16 10l3 4" stroke="#4a4a4a" stroke-width="1.6" fill="none"/></svg>
<div class="r" style="left:201px;top:672px;width:508px;height:24px;background:#fff;border-bottom:1.5px solid #8c8c8c;border-right:1.5px solid #8c8c8c;border-left:1px solid #d0d0d0;box-sizing:border-box;"></div>
<div class="t sans" style="left:204.0px;top:676.8px;font-size:15px;color:#1a1a1a;letter-spacing:0.170px;">Function in Kni.c (z:\dpdk\dpdk-course\12_knidebug) at line 873 (54 lines)</div>
<div class="r" style="left:0px;top:700px;width:1461px;height:1px;background:#e0e0e0;"></div>
<div class="t dsans" style="left:6.0px;top:739.6px;font-size:16px;color:#3b7d5e;letter-spacing:-0.288px;">static int</div>
<div class="r" style="left:79.5px;top:735.3px;width:144px;height:25px;background:#0c0c84;"></div>
<div class="t sans" style="left:81.0px;top:735.0px;font-size:22.5px;color:#fff;letter-spacing:0.087px;font-weight:bold;">udp_process</div>
<div class="t dsans" style="left:224.0px;top:739.6px;font-size:16px;color:#a23c9e;">(</div>
<div class="t dsans" style="left:231.0px;top:739.6px;font-size:16px;color:#e8141a;letter-spacing:-0.264px;font-weight:bold;">struct</div>
<div class="t dsans" style="left:292.0px;top:739.6px;font-size:16px;color:#4a7a5c;letter-spacing:-0.526px;">rte_mbuf</div>
<div class="t dsans" style="left:370.5px;top:739.6px;font-size:16px;color:#14147e;font-weight:bold;">*</div>
<div class="t dsans" style="left:381.0px;top:739.6px;font-size:16px;color:#14147e;letter-spacing:-0.111px;font-weight:bold;text-decoration:underline;text-underline-offset:2px;">udpmbuf</div>
<div class="t dsans" style="left:463.0px;top:739.6px;font-size:16px;color:#a23c9e;">)</div>
<div class="t dsans" style="left:476.0px;top:739.6px;font-size:16px;color:#a23c9e;">{</div>
<div class="t dsans" style="left:46.0px;top:779.0px;font-size:16px;color:#e8141a;letter-spacing:-0.431px;font-weight:bold;">struct</div>
<div class="t dsans" style="left:107.0px;top:779.0px;font-size:16px;color:#4a7a5c;letter-spacing:0.098px;">rte_ipv4_hdr</div>
<div class="t dsans" style="left:215.0px;top:779.0px;font-size:16px;color:#14147e;font-weight:bold;">*</div>
<div class="t dsans" style="left:224.0px;top:779.0px;font-size:16px;color:#14147e;letter-spacing:0.266px;font-weight:bold;">iphdr</div>
<div class="t dsans" style="left:280.5px;top:779.0px;font-size:16px;color:#14147e;font-weight:bold;">=</div>
<div class="t dsans" style="left:304.0px;top:779.0px;font-size:16px;color:#1d5a1d;letter-spacing:0.506px;font-weight:bold;">rte_pktmbuf_mtod_offset</div>
<div class="t dsans" style="left:541.0px;top:779.0px;font-size:16px;color:#a23c9e;">(</div>
<div class="t dsans" style="left:548.0px;top:779.0px;font-size:16px;color:#1b7282;letter-spacing:0.318px;font-weight:bold;">udpmbuf</div>
<div class="t dsans" style="left:632.0px;top:779.0px;font-size:16px;color:#a23c9e;">,</div>
<div class="t dsans" style="left:643.0px;top:779.0px;font-size:16px;color:#e8141a;letter-spacing:-0.264px;font-weight:bold;">struct</div>
<div class="t dsans" style="left:703.0px;top:779.0px;font-size:16px;color:#4a7a5c;letter-spacing:0.182px;">rte_ipv4_hdr</div>
<div class="t dsans" style="left:813.0px;top:779.0px;font-size:16px;color:#5f7f98;">*</div>
<div class="t dsans" style="left:823.0px;top:779.0px;font-size:16px;color:#a23c9e;">,</div>
<div class="t dsans" style="left:166.0px;top:797.2px;font-size:16px;color:#4a7a5c;letter-spacing:-0.741px;">sizeof</div>
<div class="t dsans" style="left:208.0px;top:797.2px;font-size:16px;color:#a23c9e;">(</div>
<div class="t dsans" style="left:215.0px;top:797.2px;font-size:16px;color:#e8141a;letter-spacing:-0.264px;font-weight:bold;">struct</div>
<div class="t dsans" style="left:275.0px;top:797.2px;font-size:16px;color:#4a7a5c;letter-spacing:0.288px;">rte_ether_hdr</div>
<div class="t dsans" style="left:388.0px;top:797.2px;font-size:16px;color:#a23c9e;letter-spacing:2.375px;">));</div>
<div class="t dsans" style="left:46.0px;top:815.6px;font-size:16px;color:#e8141a;letter-spacing:-0.431px;font-weight:bold;">struct</div>
<div class="t dsans" style="left:107.0px;top:815.6px;font-size:16px;color:#4a7a5c;letter-spacing:0.180px;">rte_udp_hdr</div>
<div class="t dsans" style="left:212.0px;top:815.6px;font-size:16px;color:#14147e;font-weight:bold;">*</div>
<div class="t dsans" style="left:221.0px;top:815.6px;font-size:16px;color:#14147e;letter-spacing:-0.172px;font-weight:bold;">udphdr</div>
<div class="t dsans" style="left:292.5px;top:815.6px;font-size:16px;color:#14147e;font-weight:bold;">=</div>
<div class="t dsans" style="left:310.0px;top:815.6px;font-size:16px;color:#a23c9e;">(</div>
<div class="t dsans" style="left:316.0px;top:815.6px;font-size:16px;color:#e8141a;letter-spacing:-0.264px;font-weight:bold;">struct</div>
<div class="t dsans" style="left:376.0px;top:815.6px;font-size:16px;color:#4a7a5c;letter-spacing:0.180px;">rte_udp_hdr</div>
<div class="t dsans" style="left:482.0px;top:815.6px;font-size:16px;color:#a23c9e;">*)(</div>
<div class="t dsans" style="left:505.0px;top:815.6px;font-size:16px;color:#1b7282;letter-spacing:-0.295px;">iphdr</div>
<div class="t dsans" style="left:552.0px;top:815.6px;font-size:16px;color:#5f7f98;">+</div>
<div class="t dsans" style="left:568.0px;top:815.6px;font-size:16px;color:#d65a55;">1</div>
<div class="t dsans" style="left:578.0px;top:815.6px;font-size:16px;color:#a23c9e;">);</div>
<svg style="left:0;top:0" width="1461" height="820" viewBox="0 0 1461 820" fill="none" stroke="#e2260f" stroke-width="2.5" stroke-linecap="round" stroke-linejoin="round"><path d="M1146.5 222.6 C1146 235 1145.5 248 1146 257.5 C1147 262 1149.5 263 1151.3 262.3 C1156 259 1159 254 1161.8 249.8 C1165 245 1168 241 1169.9 237.4"/><path d="M1202 221 L1201 259.4"/><path d="M1205 213.8 C1207 213 1208.5 213.2 1209.7 214 C1214 218 1217 222.5 1219.3 226.8 C1222 231 1224.5 235 1225.4 238.3 C1225.8 242 1225.6 246 1225.4 250.2 L1202 250.5"/><path d="M1033 297.4 L1069.8 297 L1100.5 294.5 L1125.4 293 L1200 293 L1207.8 291.3 L1286 291.3" stroke-width="2.6"/><path d="M424.6 370.3 C423.5 365 423.5 360 424 355 C427 348 431 343 437 339.5 C445 336.5 453 335.5 461.6 334.4 C473 331.5 485 329.5 496.5 328.2 L630 328.2 C636 329.5 641.5 331.5 646.4 334.4 C652 336.5 658 339 661.8 342.6 C665 346 666 350 664.9 353.9 C662.5 357.5 659 359.5 654.6 360 C640 361.5 620 361.5 605 362 C598 363 591 365 584.8 366.2 C565 368.5 545 369 523 369.3 C490 370.5 455 370.5 424.6 370.3 Z"/><path d="M470.8 350.8 C472 345 476 340.5 482 337.5 C487 334.5 492.5 333 498.6 332.3 C525 331.5 560 332 584.8 333.3 C595 334 604 335.5 611.5 338.5 C618 341.5 621.5 346 621.8 350.8 C622.3 354 622 357.5 620.7 360 C610 361.8 597 362 584.8 362 C560 363.5 530 364.5 506.8 364.1 C497 363 488 361 482 358 C476 356 472 353.5 470.8 350.8 Z"/><path d="M451 359.5 C465 360.5 485 362.5 503 364.2 M452 361.5 L500 362" stroke-width="2"/></svg>
<div class="a" style="left:0;top:0;width:1461px;height:820px;opacity:0.72;pointer-events:none"><div class="a" style="left:581px;top:433px;width:0;height:0;transform:skewX(-20deg);transform-origin:0 0"><div class="t sans" style="left:3px;top:-50.7px;font-size:57px;font-weight:bold;color:#ee8a5c;transform-origin:0 0;transform:scale(0.658,1);-webkit-text-stroke:5px #ee8a5c">E</div><div class="t sans" style="left:30px;top:-40.6px;font-size:45px;font-weight:bold;color:#ee8a5c;transform-origin:0 0;transform:scale(0.909,1);-webkit-text-stroke:5px #ee8a5c">n</div><div class="t sans" style="left:60px;top:-36.1px;font-size:32px;font-weight:bold;color:#ee8a5c;transform-origin:0 0;transform:scale(0.818,1);-webkit-text-stroke:4.5px #ee8a5c">g</div><div class="t sans" style="left:79px;top:-50.7px;font-size:57px;font-weight:bold;color:#ee8a5c;transform-origin:0 0;transform:scale(0.535,1);-webkit-text-stroke:5px #ee8a5c">C</div><div class="t sans" style="left:104px;top:-50.7px;font-size:57px;font-weight:bold;color:#ee8a5c;transform-origin:0 0;transform:scale(0.486,1);-webkit-text-stroke:5px #ee8a5c">N</div><div class="a" style="left:0;top:-6px;width:126px;height:6px;background:#ee8a5c"></div></div><div class="t" style="left:716px;top:386.5px;font-family:'Liberation Sans','Noto Sans CJK SC',sans-serif;font-size:23.5px;font-weight:bold;color:#ee8a5c;letter-spacing:0.4px;transform-origin:0 100%;transform:skewX(-14deg) scale(1.12,1);-webkit-text-stroke:1.1px #ee8a5c">工程师论坛网</div><div class="a" style="left:711px;top:412px;width:160px;height:21px;background:#ee8a5c;transform:skewX(-14deg)"></div></div><div class="t sans" style="left:715px;top:412.5px;font-size:18.6px;font-weight:bold;font-style:italic;color:#fff;letter-spacing:-0.2px">www.EngCN.com</div>
</body></html>
